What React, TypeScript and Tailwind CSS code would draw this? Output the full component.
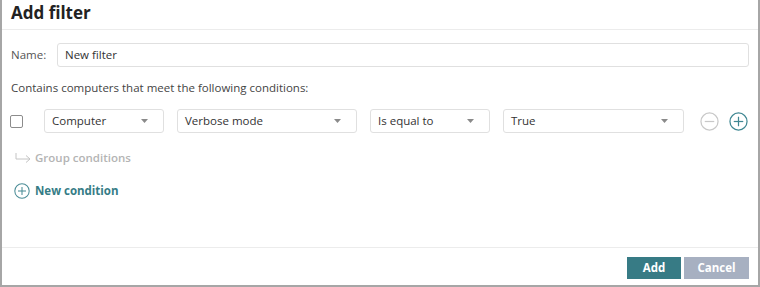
import React from "react";

const font = { fontFamily: '"Open Sans", "Liberation Sans", sans-serif' };

function Caret() {
  return (
    <svg width="7" height="4" viewBox="0 0 7 4" className="shrink-0">
      <path d="M0 0 L7 0 L3.5 4 Z" fill="#8a8a8a" />
    </svg>
  );
}

function SelectBox({ label, width }: { label: string; width: string }) {
  return (
    <div
      className={`${width} h-[24px] flex items-center justify-between pl-[7px] pr-[15px] border border-[#e0e0e0] rounded-[3px] bg-white text-[11.5px] text-[#333]`}
    >
      <span>{label}</span>
      <Caret />
    </div>
  );
}

function CircleIcon({ size, color, minus }: { size: number; color: string; minus?: boolean }) {
  return (
    <svg width={size} height={size} viewBox="0 0 20 20">
      <circle cx="10" cy="10" r="9" fill="none" stroke={color} strokeWidth="1.3" />
      <path d="M5 10 H15" stroke={color} strokeWidth="1.3" />
      {!minus && <path d="M10 5 V15" stroke={color} strokeWidth="1.3" />}
    </svg>
  );
}

export default function App() {
  return (
    <div
      style={font}
      className="w-[760px] h-[287px] bg-white flex flex-col border-l-2 border-r-2 border-b-2 border-[#a6a6a6]"
    >
      {/* HEADER */}
      <div className="h-[30px] shrink-0 flex items-center pl-[9px] border-b border-[#ececec]">
        <h1 className="text-[17px] font-bold text-[#222] leading-none -mt-[4px]">Add filter</h1>
      </div>

      {/* BODY */}
      <div className="flex-1 px-[9px]">
        {/* NAME */}
        <div className="flex items-center mt-[13px]">
          <label className="w-[46px] text-[11.5px] text-[#555]">Name:</label>
          <div className="flex-1 h-[24px] flex items-center px-[7px] border border-[#e0e0e0] rounded-[3px] text-[11.5px] text-[#333]">
            New filter
          </div>
        </div>

        <div className="mt-[12px] text-[11.5px] leading-[18px] text-[#444]">
          Contains computers that meet the following conditions:
        </div>

        {/* CONDITION ROW */}
        <div className="flex items-center mt-[12px]">
          <div className="w-[13px] h-[13px] ml-[-1px] border border-[#8c8c8c] rounded-[2px] bg-white" />
          <div className="flex items-center ml-[21px] gap-[13px]">
            <SelectBox label="Computer" width="w-[120px]" />
            <SelectBox label="Verbose mode" width="w-[180px]" />
            <SelectBox label="Is equal to" width="w-[120px]" />
            <SelectBox label="True" width="w-[181px]" />
          </div>
          <div className="flex items-center ml-[16px] gap-[10px]">
            <CircleIcon size={19} color="#c8c8c8" minus />
            <CircleIcon size={19} color="#3f8792" />
          </div>
        </div>

        {/* GROUP CONDITIONS */}
        <div className="flex items-center mt-[16px] h-[18px] text-[11.5px] font-semibold text-[#b4b4b4]">
          <svg width="17" height="10" viewBox="0 0 17 10" className="ml-[4px] mr-[3px]">
            <path d="M1 0 V6 H15 M11 2.5 L15 6 L11 9.5" fill="none" stroke="#c4c4c4" strokeWidth="1" />
          </svg>
          Group conditions
        </div>

        {/* NEW CONDITION */}
        <div className="flex items-center mt-[15px] h-[18px] text-[11.5px] font-bold text-[#357c86]">
          <span className="ml-[3px] mr-[5px] flex">
            <CircleIcon size={16} color="#4a8c96" />
          </span>
          New condition
        </div>
      </div>

      {/* FOOTER */}
      <div className="h-[38px] shrink-0 border-t border-[#ececec] flex justify-end items-start pt-[9px] pr-[9px] gap-[3px]">
        <button className="w-[54px] h-[22px] bg-[#377b85] text-white text-[11.5px] font-bold">Add</button>
        <button className="w-[65px] h-[22px] bg-[#a7b0c1] text-white text-[11.5px] font-bold">Cancel</button>
      </div>
    </div>
  );
}
